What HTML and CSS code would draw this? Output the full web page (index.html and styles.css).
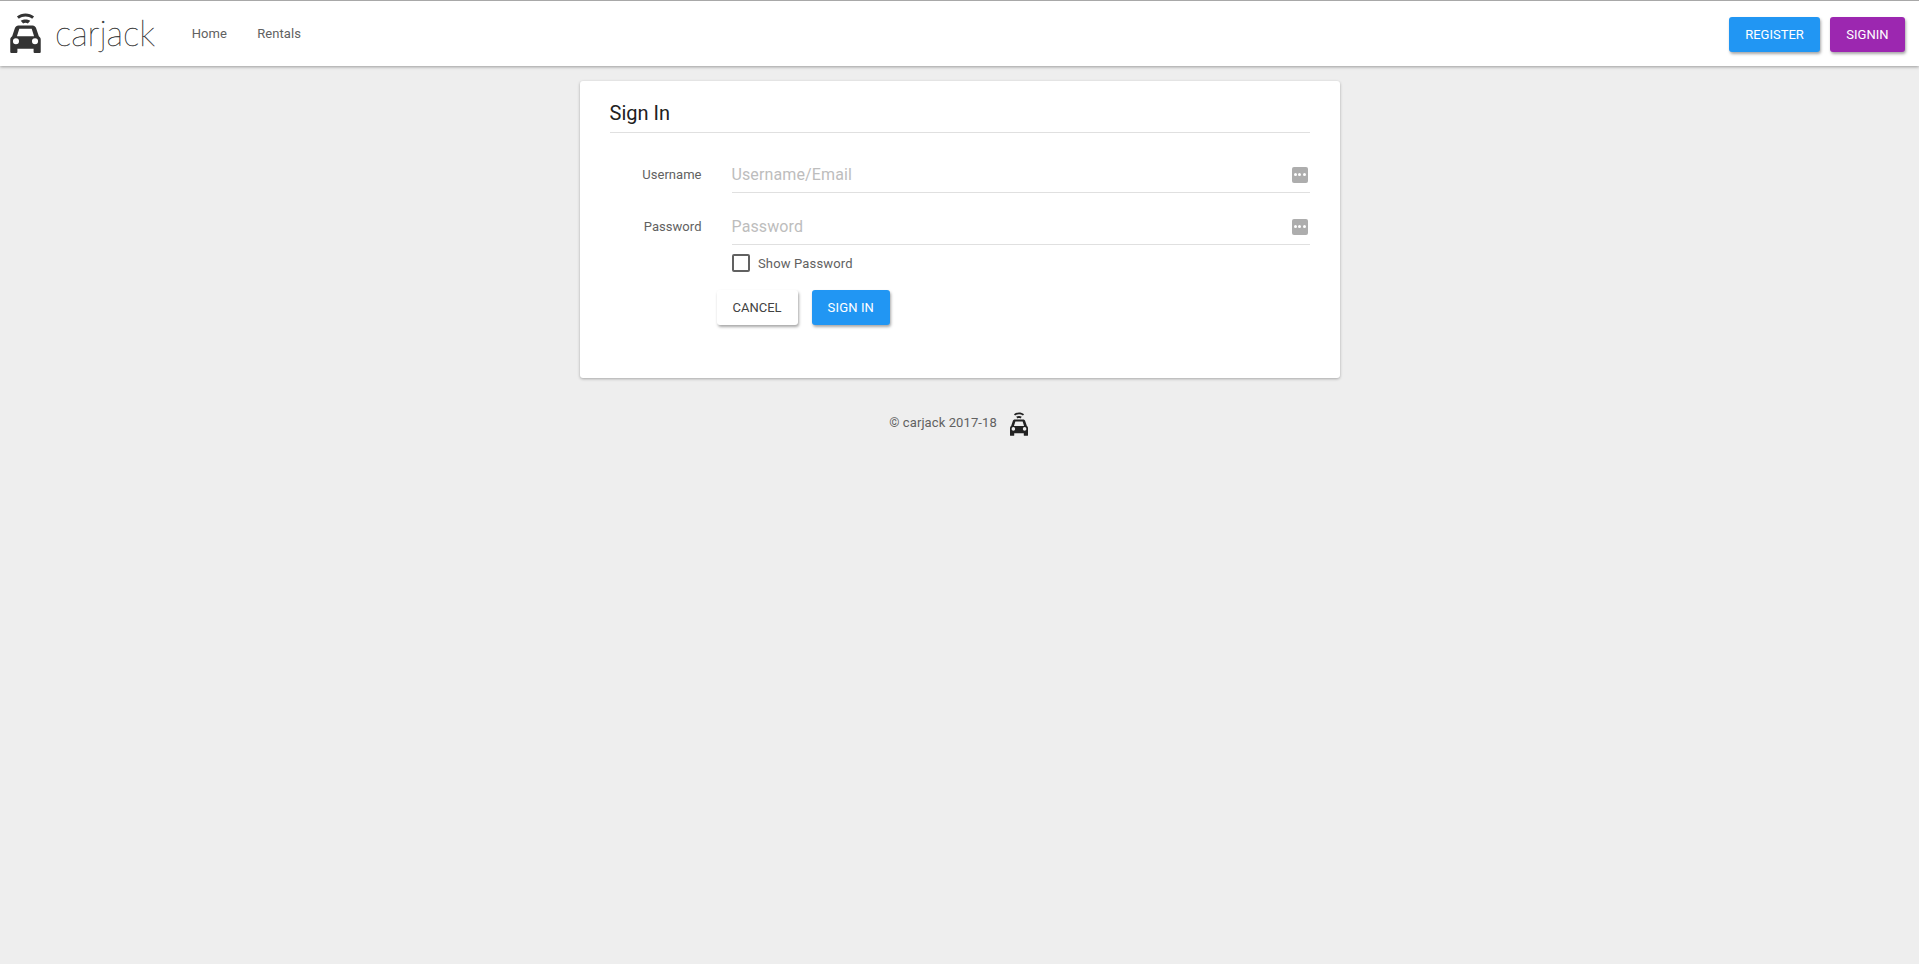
FILE: index.html
```html
<!DOCTYPE html>
<html lang="en">
<head>
<meta charset="utf-8">
<title>carjack</title>
<link rel="stylesheet" href="styles.css">
</head>
<body>
<svg class="defs" width="0" height="0" aria-hidden="true">
  <symbol id="car" viewBox="0 0 32 42">
    <path d="M7 3.600C12 -.6 20 -.6 25 3.600L23 6C19 3 13 3 9 6Z"/>
    <path d="M11 8.200C14 6.200 18 6.200 21 8.200L18.500 11C17 10 15 10 13.500 11Z"/>
    <path fill-rule="evenodd" d="M8.500 13H23.500C25.200 13 26.400 14 27 15.500L30 24.500C31.300 25.300 32 26.600 32 28V41C32 41.600 31.600 42 31 42H25.500C24.900 42 24.500 41.600 24.500 41V37.500H7.500V41C7.500 41.600 7.100 42 6.500 42H1C.4 42 0 41.600 0 41V28C0 26.600 .7 25.300 2 24.500L5 15.500C5.600 14 6.800 13 8.500 13ZM9.500 16.500 7 24.500H25L22.500 16.500ZM6 26.500A3.200 3.200 0 1 0 6 32.900 3.200 3.200 0 1 0 6 26.500ZM26 26.500A3.200 3.200 0 1 0 26 32.900 3.200 3.200 0 1 0 26 26.500Z"/>
  </symbol>
</svg>

<header class="topbar">
  <div class="topbar-left">
    <a class="brand" href="#">
      <svg class="brand-icon"><use href="#car"/></svg>
      <span class="brand-name">carjack</span>
    </a>
    <nav class="nav">
      <a class="nav-link" href="#">Home</a>
      <a class="nav-link" href="#">Rentals</a>
    </nav>
  </div>
  <div class="topbar-right">
    <button class="btn btn-primary" type="button">REGISTER</button>
    <button class="btn btn-accent" type="button">SIGNIN</button>
  </div>
</header>

<main class="page">
  <section class="card">
    <h1 class="card-title">Sign In</h1>
    <form class="form">
      <div class="field">
        <label class="field-label" for="user">Username</label>
        <div class="field-control">
          <input class="field-input" id="user" type="text" placeholder="Username/Email">
          <span class="field-icon"><i></i><i></i><i></i></span>
        </div>
      </div>
      <div class="field">
        <label class="field-label" for="pass">Password</label>
        <div class="field-control">
          <input class="field-input" id="pass" type="text" placeholder="Password">
          <span class="field-icon"><i></i><i></i><i></i></span>
        </div>
      </div>
      <label class="show-password">
        <span class="checkbox"></span>
        <span>Show Password</span>
      </label>
      <div class="actions">
        <button class="btn btn-plain" type="button">CANCEL</button>
        <button class="btn btn-primary btn-submit" type="button">SIGN IN</button>
      </div>
    </form>
  </section>
  <footer class="footer">
    <span class="footer-text">© carjack 2017-18</span>
    <svg class="footer-icon"><use href="#car"/></svg>
  </footer>
</main>
</body>
</html>
```

FILE: styles.css
```css
* { box-sizing: border-box; }
html, body { height: 100%; }
body {
  margin: 0;
  background: #eeeeee;
  font-family: Roboto, "Liberation Sans", sans-serif;
  color: #616161;
  overflow: hidden;
}
.defs { position: absolute; }
.topbar {
  height: 66px;
  border-top: 1px solid #a8a8a8;
  background: #fff;
  box-shadow: 0 1px 3px rgba(0,0,0,.35);
  display: flex;
  justify-content: space-between;
  align-items: center;
  padding: 0 14px 0 10px;
}
.topbar-left { display: flex; align-items: center; }
.brand {
  display: flex;
  align-items: center;
  text-decoration: none;
  color: #333;
}
.brand-icon { width: 31px; height: 40px; fill: #333; margin-top: -2px; }
.brand-name {
  font-family: Lato, sans-serif;
  font-weight: 100;
  font-size: 35px;
  line-height: 40px;
  margin-left: 14px;
  margin-top: -4px;
  letter-spacing: -.15px;
  color: #333;
  -webkit-text-stroke: .35px #333;
}
.nav { display: flex; gap: 30px; margin-left: 37px; }
.nav-link { font-size: 13px; color: #616161; text-decoration: none; letter-spacing: .1px; }
.topbar-right { display: flex; gap: 10px; margin-top: 1px; }
.btn {
  height: 35px;
  border: 0;
  border-radius: 3px;
  font-family: inherit;
  font-size: 13px;
  padding: 0 16px;
  color: #fff;
  box-shadow: 1px 2px 3px rgba(0,0,0,.35);
}
.btn-primary { background: #2196f3; }
.btn-accent { background: #9c27b0; padding: 0 16.500px; }
.btn-plain { background: #fff; color: #424242; }
.btn-submit { letter-spacing: .15px; }
.page { display: flex; flex-direction: column; align-items: center; padding-top: 15px; }
.card {
  width: 760px;
  height: 297px;
  background: #fff;
  border-radius: 3px;
  box-shadow: 0 1px 3px rgba(0,0,0,.3);
  padding: 0 30px;
}
.card-title {
  margin: 0;
  height: 52px;
  padding-top: 19px;
  font-size: 20px;
  font-weight: 400;
  line-height: 27px;
  color: #212121;
  border-bottom: 1px solid #e0e0e0;
}
.form { display: flex; flex-direction: column; margin-top: 8px; }
.field { display: flex; height: 52px; padding-top: 16px; }
.field-label {
  width: 92px;
  text-align: right;
  font-size: 13px;
  letter-spacing: .03px;
  align-self: center;
  margin-top: -2px;
  color: #616161;
}
.field-control {
  margin-left: 30px;
  flex: 1;
  display: flex;
  align-items: center;
  border-bottom: 1px solid #e0e0e0;
}
.field-input {
  flex: 1;
  border: 0;
  outline: 0;
  padding: 0;
  font-family: inherit;
  font-size: 16px;
  letter-spacing: .12px;
  color: #424242;
  background: transparent;
}
.field-input::placeholder { color: #bdbdbd; opacity: 1; }
.field-icon {
  width: 16px;
  height: 16px;
  margin-right: 2px;
  background: #adadad;
  border-radius: 2px;
  display: flex;
  align-items: center;
  justify-content: center;
  gap: 1.500px;
}
.field-icon i { width: 3px; height: 3px; border-radius: 50%; background: #fff; }
.show-password {
  display: flex;
  align-items: center;
  gap: 8.500px;
  margin: 9px 0 0 122px;
  font-size: 13px;
  letter-spacing: .15px;
  color: #616161;
}
.checkbox {
  width: 18px;
  height: 18px;
  border: 2px solid #616161;
  border-radius: 2px;
}
.actions { display: flex; gap: 14px; margin: 18px 0 0 107px; }
.footer {
  display: flex;
  align-items: center;
  gap: 13px;
  margin-top: 34px;
  margin-right: 2px;
  font-size: 13px;
  letter-spacing: .1px;
  color: #616161;
}
.footer-text { margin-top: -3px; }
.footer-icon { width: 18px; height: 24px; fill: #222; }
```
